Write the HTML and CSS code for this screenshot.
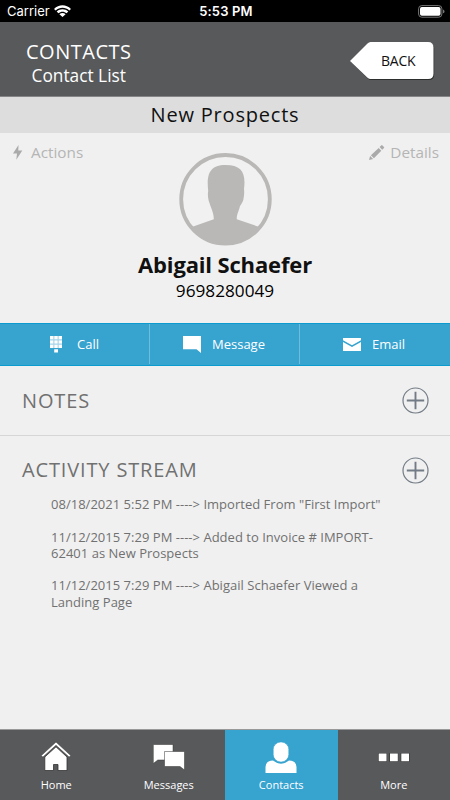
FILE: index.html
```
<!DOCTYPE html>
<html lang="en">
<head>
    <meta charset="UTF-8">
    <meta name="viewport" content="width=device-width, initial-scale=1.0">
    <title>Contacts</title>
    <link rel="stylesheet" href="styles.css">
</head>
<body>
    <div class="status-bar">
        <div class="carrier">
            <span>Carrier</span>
            <svg width="17" height="12" viewBox="0 0 17 12" fill="#fff">
                <path d="M0 3.900C4.800-.9 12.200-.9 17 3.900L15.300 5.600C11.500 1.900 5.500 1.900 1.700 5.600Z"/>
                <path d="M2.700 6.600C5.900 3.400 11.100 3.400 14.300 6.600L12.600 8.300C10.300 6.100 6.700 6.100 4.400 8.300Z"/>
                <path d="M5.400 9.200C7.200 7.600 9.800 7.600 11.600 9.200L8.500 12Z"/>
            </svg>
        </div>
        <div class="clock">5:53 PM</div>
        <svg class="battery" width="27" height="13" viewBox="0 0 27 13">
            <rect x=".6" y=".6" width="23.300" height="11.600" rx="3.200" fill="none" stroke="#777"/>
            <rect x="2" y="2" width="20.500" height="8.800" rx="1.800" fill="#fff"/>
            <path d="M25 4.500Q26.500 5 26.500 6.400T25 8.300Z" fill="#777"/>
        </svg>
    </div>

    <header class="header">
        <div class="heading">
            <h1>CONTACTS</h1>
            <p>Contact List</p>
        </div>
        <a class="back" href="#">
            <svg width="86" height="40" viewBox="0 0 86 40">
                <path d="M.5 19.500L18 2.200Q19.500 1 21 1H78.500Q84.200 1 84.200 6.500V32.500Q84.200 38 78.500 38H21Q19.500 38 18 36.800Z" fill="#222" opacity=".8"/>
                <path d="M0 19L17.500 1.500Q19 0 20.500 0H78Q83.500 0 83.500 5.500V31.700Q83.500 37 78 37H20.500Q19 37 17.500 35.800Z" fill="#fff"/>
            </svg>
            <span>BACK</span>
        </a>
    </header>

    <div class="group">New Prospects</div>

    <section class="profile">
        <div class="links">
            <a href="#">
                <svg width="10" height="15" viewBox="0 0 10 15" fill="#aaa"><path d="M5.500 0L0 8.500H4L3.300 14.700L9.300 5.500H5.300Z"/></svg>
                <span>Actions</span>
            </a>
            <a href="#" class="details">
                <svg width="16" height="15" viewBox="0 0 16 15" fill="#aaa">
                    <path d="M0 15L1.100 11L4.100 14ZM1.900 10.200L9.700 2.900L12.300 5.700L4.900 13.200ZM10.600 2L12.500.3Q13-.1 13.500.4L15 2Q15.400 2.500 15 3L13.200 4.800Z"/>
                </svg>
                <span>Details</span>
            </a>
        </div>
        <svg class="avatar" width="93" height="93" viewBox="0 0 93 93">
            <circle cx="46.500" cy="46.300" r="44.300" fill="#f1f1f1" stroke="#b9b8b6" stroke-width="3.800"/>
            <path d="M13.500 73.700L34.800 66.300C35 60 31.500 54 30.500 50C29 46 28.500 41 29.200 38C27.500 22 30 12 46.500 12C63 12 67 20 65 36C65.500 40 65 43 64.300 47C63 51 61 52 60.500 55C59 60 57.500 62 57.800 66.200L79.500 73.700C72 84 61 90 46.500 90S21 84 13.500 73.700Z" fill="#b9b8b6"/>
        </svg>
        <h2>Abigail Schaefer</h2>
        <p class="phone">9698280049</p>
    </section>

    <div class="actions">
        <a href="#">
            <svg width="12" height="17" viewBox="0 0 12 17" fill="#fff">
                <path d="M0 0H12V12H0Z" opacity=".55"/>
                <path d="M0 0H3.300V3.300H0ZM4.400 0H7.600V3.300H4.400ZM8.700 0H12V3.300H8.700ZM0 4.400H3.300V7.600H0ZM4.400 4.400H7.600V7.600H4.400ZM8.700 4.400H12V7.600H8.700ZM0 8.700H3.300V12H0ZM4.400 8.700H7.600V12H4.400ZM8.700 8.700H12V12H8.700ZM4.200 13.200H8V16.500H4.200Z"/>
            </svg>
            <span>Call</span>
        </a>
        <a href="#" class="message">
            <svg width="18" height="17" viewBox="0 0 18 17" fill="#fff"><path d="M0 0H18V17L13.500 13.200H0Z"/></svg>
            <span>Message</span>
        </a>
        <a href="#" class="email">
            <svg width="18" height="13" viewBox="0 0 18 13" fill="#fff"><path d="M0 0H18V2.300L9 7.300L0 2.300ZM0 4L9 9L18 4V13H0Z"/></svg>
            <span>Email</span>
        </a>
    </div>

    <section class="notes">
        <h3>NOTES</h3>
        <svg width="27" height="27" viewBox="0 0 27 27" fill="none" stroke="#737c86">
            <circle cx="13.500" cy="13.500" r="12.500" stroke-width="1.200"/>
            <path d="M4.800 13.500H22.200M13.500 4.800V22.200" stroke-width="1.900"/>
        </svg>
    </section>

    <section class="activity">
        <div class="activity-head">
            <h3>ACTIVITY STREAM</h3>
            <svg width="27" height="27" viewBox="0 0 27 27" fill="none" stroke="#737c86">
                <circle cx="13.500" cy="13.500" r="12.500" stroke-width="1.200"/>
                <path d="M4.800 13.500H22.200M13.500 4.800V22.200" stroke-width="1.900"/>
            </svg>
        </div>
        <ul>
            <li>08/18/2021 5:52 PM ----&gt; Imported From "First Import"</li>
            <li>11/12/2015 7:29 PM ----&gt; Added to Invoice # IMPORT-<br>62401 as New Prospects</li>
            <li>11/12/2015 7:29 PM ----&gt; Abigail Schaefer Viewed a<br>Landing Page</li>
        </ul>
    </section>

    <nav class="tabs">
        <a href="#">
            <svg width="32" height="32" viewBox="0 0 32 32">
                <path d="M16 5.800L4.800 16V29.500H13.500V23.500H18V29.500H27V16Z" fill="#fff" stroke="#333" stroke-width=".8"/>
                <path d="M16 1L1 14.800L3 16L16 4.300L29 16L31 14.800Z" fill="#fff" stroke="#333" stroke-width=".5"/>
            </svg>
            <span>Home</span>
        </a>
        <a href="#">
            <svg width="32" height="32" viewBox="0 0 32 32" fill="#fff" stroke="#333" stroke-width=".5">
                <path d="M.3 3.500H20V19H4.800L.3 22.500Z"/>
                <path d="M11.500 10.500H31.500V29L27 25.500H11.500Z"/>
            </svg>
            <span>Messages</span>
        </a>
        <a href="#" class="active">
            <svg width="32" height="32" viewBox="0 0 32 32" fill="#fff">
                <path d="M.5 32V26Q.5 20 8 19.500Q16 26 24 19.500Q31.500 20 31.500 26V32Z"/>
                <rect x="8.200" y="1" width="15.600" height="20" rx="7.500" stroke="#37a3cf" stroke-width=".6"/>
            </svg>
            <span>Contacts</span>
        </a>
        <a href="#">
            <svg width="32" height="32" viewBox="0 0 32 32">
                <path d="M.2 12H8.800V20.800H.2ZM11.400 12H20.200V20.800H11.400ZM22.700 12H31.500V20.800H22.700Z" fill="#333"/>
                <path d="M.7 12.500H8.500V20.300H.7ZM12 12.500H19.800V20.300H12ZM23.300 12.500H31V20.300H23.300Z" fill="#fff"/>
            </svg>
            <span>More</span>
        </a>
    </nav>
</body>
</html>
```
FILE: styles.css
```
* {
    box-sizing: border-box;
}
body {
    margin: 0;
    width: 450px;
    height: 800px;
    display: flex;
    flex-direction: column;
    overflow: hidden;
    background-color: #f0f0f0;
    font-family: "Open Sans", sans-serif;
    color: #111;
}
h1, h2, h3, p, ul {
    margin: 0;
    padding: 0;
    font-weight: normal;
}
a {
    color: inherit;
    text-decoration: none;
}
svg {
    display: block;
    flex: none;
}
span, h1, h2, h3 {
    white-space: nowrap;
}
.status-bar {
    height: 22px;
    padding: 0 5px 0 7px;
    display: grid;
    grid-template-columns: 1fr auto 1fr;
    align-items: center;
    background-color: #000;
    color: #fff;
    font-family: Inter, sans-serif;
    font-size: 13px;
}
.carrier {
    display: flex;
    align-items: center;
    gap: 4px;
}
.clock {
    font-weight: 600;
    letter-spacing: 0.15px;
}
.battery {
    justify-self: end;
}
.header {
    height: 75px;
    padding: 0 16px 0 26px;
    display: flex;
    justify-content: space-between;
    background-color: #58595b;
    border-bottom: 1px solid #858587;
    color: #fff;
}
.heading {
    padding-top: 16px;
    text-align: center;
}
.heading h1 {
    font-size: 20px;
    line-height: 27px;
    letter-spacing: 0.5px;
}
.heading p {
    font-size: 17.3px;
    line-height: 22px;
}
.back {
    display: grid;
    align-self: flex-start;
    margin-top: 20px;
    width: 84px;
}
.back svg, .back span {
    grid-area: 1 / 1;
}
.back span {
    padding-left: 31px;
    color: #111;
    font-size: 14px;
    line-height: 38px;
    letter-spacing: -0.2px;
}
.group {
    height: 36px;
    background-color: #ddd;
    text-align: center;
    font-size: 20px;
    line-height: 36px;
    letter-spacing: 0.8px;
}
.profile {
    height: 190px;
    display: flex;
    flex-direction: column;
    align-items: center;
}
.links {
    align-self: stretch;
    height: 20px;
    margin-top: 9px;
    padding: 0 11px 0 13px;
    display: flex;
    justify-content: space-between;
    color: #b5b5b5;
    font-size: 15.3px;
    line-height: 21px;
}
.links a {
    display: flex;
    align-items: center;
    gap: 8px;
}
.links .details {
    gap: 5px;
}
.avatar {
    margin-top: -9px;
}
.profile h2 {
    margin-top: 3px;
    font-size: 22px;
    line-height: 30px;
    font-weight: bold;
    letter-spacing: -0.15px;
}
.phone {
    padding-top: 1px;
    font-size: 17.2px;
    line-height: 22px;
    font-weight: 500;
    color: #000;
}
.actions {
    height: 43px;
    padding-bottom: 1px;
    display: grid;
    grid-template-columns: repeat(3, 1fr);
    background-color: #37a3cf;
    border-top: 1px solid #0b9bce;
    border-bottom: 1px solid #0b9bce;
    color: #fff;
    font-size: 13px;
}
.actions a {
    display: flex;
    align-items: center;
    justify-content: center;
    gap: 15px;
    border-right: 1px solid #70bcdc;
}
.actions .message {
    gap: 11px;
    padding-right: 1px;
}
.actions .email {
    gap: 11px;
    padding-right: 2px;
    border-right: none;
}
.notes {
    height: 70px;
    padding: 0 21px 0 22px;
    display: flex;
    align-items: center;
    justify-content: space-between;
    border-bottom: 1px solid #d6d6d6;
}
h3 {
    color: #717171;
    font-size: 20px;
    line-height: 28px;
    letter-spacing: 0.85px;
}
.activity {
    flex: 1;
    padding: 20px 21px 0 22px;
}
.activity-head {
    display: flex;
    align-items: center;
    justify-content: space-between;
}
.activity ul {
    padding: 12px 0 0 29px;
    list-style: none;
    color: #717171;
    font-size: 13px;
    line-height: 16.3px;
    letter-spacing: 0.02px;
}
.activity li {
    margin-bottom: 16.3px;
    white-space: nowrap;
}
.tabs {
    height: 71px;
    display: grid;
    grid-template-columns: repeat(4, 1fr);
    background-color: #58595b;
    border-top: 1px solid #999;
    color: #fff;
    font-size: 11px;
    line-height: 15px;
}
.tabs a {
    display: flex;
    flex-direction: column;
    align-items: center;
    padding-top: 11px;
    gap: 4px;
}
.tabs .active {
    background-color: #37a3cf;
}
```
